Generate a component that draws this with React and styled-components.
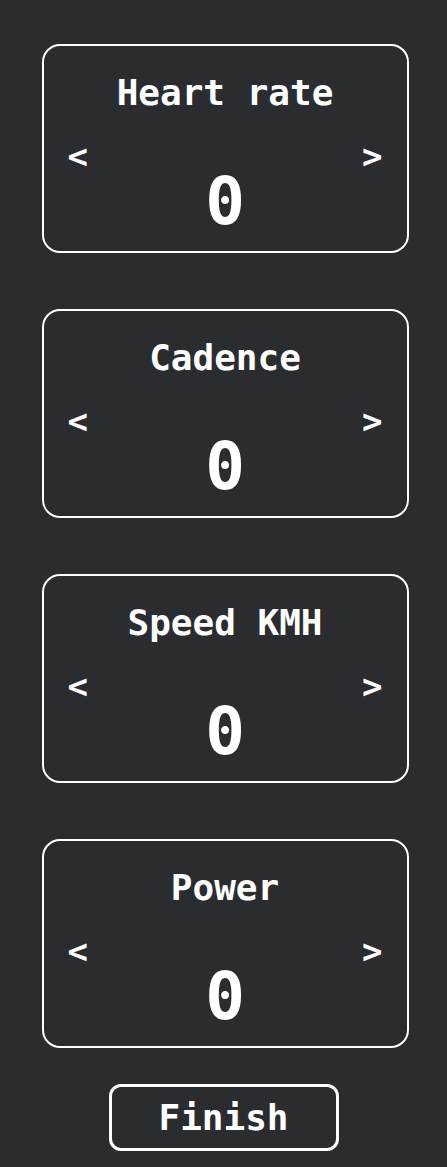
import React from 'react';
import styled, { createGlobalStyle } from 'styled-components';

const GlobalStyle = createGlobalStyle`
  html, body {
    margin: 0;
    background: #2b2c30;
  }
  body {
    font-family: "DejaVu Sans Mono", "Liberation Mono", monospace;
    color: #ffffff;
  }
`;

const Page = styled.div`
  display: flex;
  flex-direction: column;
  align-items: center;
  padding: 44px 0 0 3px;
  min-height: 1167px;
  box-sizing: border-box;
`;

const Card = styled.section`
  width: 367px;
  height: 209px;
  box-sizing: border-box;
  border: 2px solid #ffffff;
  border-radius: 18px;
  padding: 26px 24px 0;
  margin-bottom: 56px;
  display: flex;
  flex-direction: column;
  align-items: center;
`;

const Title = styled.h2`
  margin: 0;
  font-size: 36px;
  font-weight: bold;
  line-height: 42px;
`;

const Row = styled.div`
  align-self: stretch;
  display: flex;
  justify-content: space-between;
  align-items: flex-start;
`;

const Arrow = styled.button`
  background: none;
  border: none;
  color: #ffffff;
  font-family: inherit;
  font-size: 34px;
  font-weight: bold;
  line-height: 40px;
  padding: 0;
  margin-top: 22px;
  cursor: pointer;
`;

const Value = styled.div`
  font-size: 66px;
  font-weight: bold;
  line-height: 76px;
  margin-top: 50px;
`;

const FinishButton = styled.button`
  margin: -20px 0 0 -3px;
  width: 230px;
  height: 67px;
  box-sizing: border-box;
  border: 3px solid #ffffff;
  border-radius: 12px;
  background: transparent;
  color: #ffffff;
  font-family: inherit;
  font-size: 36px;
  font-weight: bold;
  padding: 0;
  cursor: pointer;
`;

const metrics = [
  { name: 'Heart rate', value: 0 },
  { name: 'Cadence', value: 0 },
  { name: 'Speed KMH', value: 0 },
  { name: 'Power', value: 0 },
];

function MetricCard({ name, value }) {
  return (
    <Card>
      <Title>{ name }</Title>
      <Row>
        <Arrow type="button">&lt;</Arrow>
        <Value>{ value }</Value>
        <Arrow type="button">&gt;</Arrow>
      </Row>
    </Card>
  );
}

export default function App() {
  return (
    <>
      <GlobalStyle />
      <Page>
        { metrics.map((m) => (
          <MetricCard key={ m.name } name={ m.name } value={ m.value } />
        )) }
        <FinishButton type="button">Finish</FinishButton>
      </Page>
    </>
  );
}
